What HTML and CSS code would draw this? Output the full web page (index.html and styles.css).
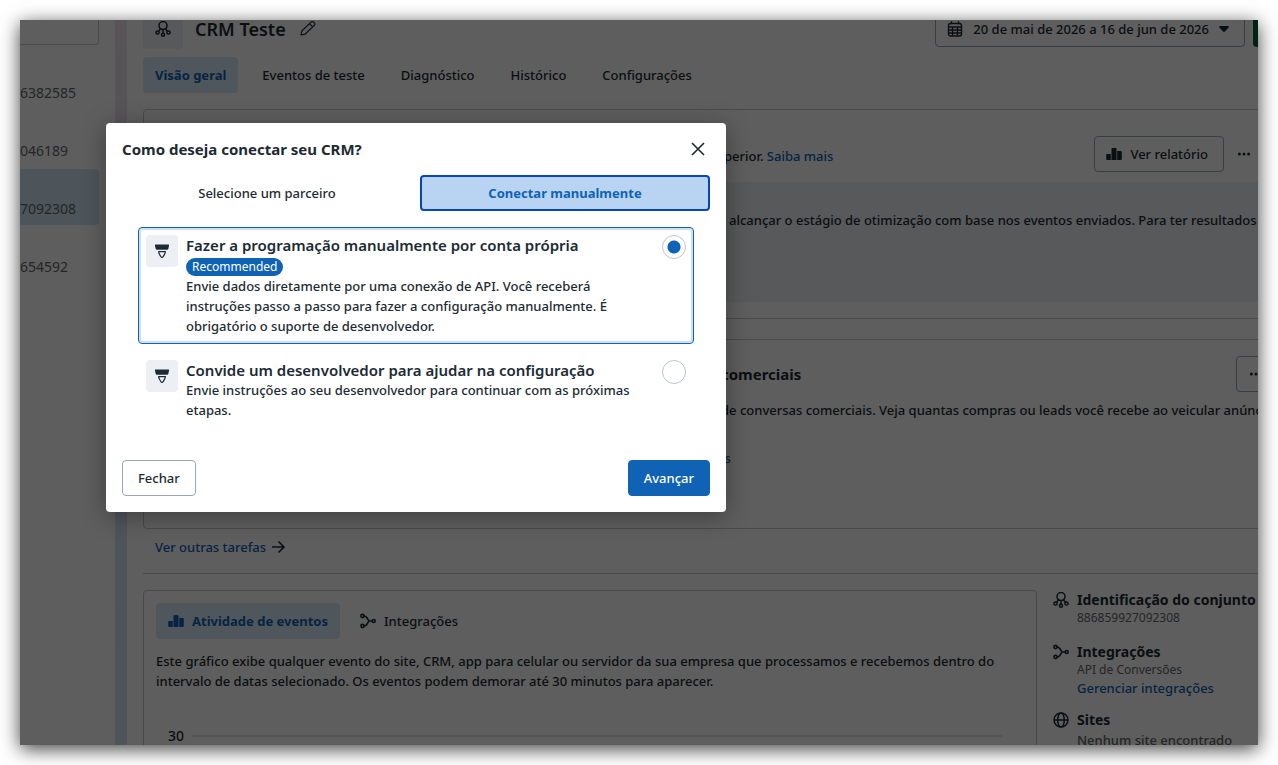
FILE: index.html
```html
<!DOCTYPE html>
<html lang="pt-BR">
<head>
  <meta charset="UTF-8">
  <meta name="viewport" content="width=device-width, initial-scale=1.0">
  <title>CRM Teste</title>
  <link rel="stylesheet" href="styles.css">
</head>
<body>
  <!-- Shared icons -->
  <svg class="icon-defs" aria-hidden="true">
    <symbol id="icon-dataset" viewBox="0 0 16 16">
      <g fill="none" stroke="currentColor" stroke-width="1.5">
        <path d="M5.300 7.600C4.300 6.800 4 5.600 4 4.500a4 4 0 0 1 8 0c0 1.100-.3 2.300-1.300 3.100M5.300 7.600c1.600 1 3.800 1 5.400 0M8 8.300v4"/>
        <circle cx="2.500" cy="11.500" r="1.600"/>
        <circle cx="8" cy="13.700" r="1.500"/>
        <circle cx="13.500" cy="11.500" r="1.600"/>
        <path d="M3.600 10.300l2.200-2.800M12.400 10.300l-2.200-2.800"/>
      </g>
    </symbol>
    <symbol id="icon-bars" viewBox="0 0 16 16">
      <path fill="currentColor" d="M1.2 8h3.600v6H1.2a1 1 0 0 1-1-1V9a1 1 0 0 1 1-1zM6.300 2h3.400a.8.8 0 0 1 .8.8V14h-5V2.800a.8.8 0 0 1 .8-.8zM11.200 5h3.600a1 1 0 0 1 1 1v7a1 1 0 0 1-1 1h-3.600z"/>
    </symbol>
    <symbol id="icon-branch" viewBox="0 0 16 16">
      <g fill="none" stroke="currentColor" stroke-width="1.6">
        <circle cx="2.500" cy="3" r="1.600"/>
        <circle cx="2.500" cy="13" r="1.600"/>
        <circle cx="13.700" cy="8" r="1.500"/>
        <path d="M4 3c4 0 3.500 5 5.500 5h2.700M4 13c4 0 3.500-5 5.500-5"/>
      </g>
    </symbol>
    <symbol id="icon-marker" viewBox="0 0 16 16">
      <path fill="currentColor" d="M1.500 1.500h13a.6.6 0 0 1 .6.700l-.7 3.200c-.2.900-.8 1.400-1.700 1.400H3.300c-.9 0-1.500-.5-1.700-1.400L.9 2.200A.6.6 0 0 1 1.500 1.500z"/>
      <path fill="none" stroke="currentColor" stroke-width="1.200" d="M4.700 8.700h6.600c.2 1.300-.7 2.700-2.200 5a1.300 1.300 0 0 1-2.200 0c-1.500-2.300-2.400-3.700-2.200-5z"/>
    </symbol>
    <symbol id="icon-dots" viewBox="0 0 16 16">
      <g fill="currentColor"><circle cx="3.400" cy="8" r="1.500"/><circle cx="8" cy="8" r="1.500"/><circle cx="12.600" cy="8" r="1.500"/></g>
    </symbol>
  </svg>

  <div class="window">
    <div class="app">
      <aside class="sidebar">
        <input class="search" type="text" aria-label="Pesquisar">
        <nav class="dataset-list">
          <a href="#">6382585</a>
          <a href="#">046189</a>
          <a href="#" class="selected">7092308</a>
          <a href="#">654592</a>
        </nav>
      </aside>

      <main class="main">
        <header class="page-header">
          <span class="dataset-icon"><svg class="icon"><use href="#icon-dataset"/></svg></span>
          <h1>CRM Teste</h1>
          <button class="edit-button" aria-label="Editar">
            <svg class="icon" viewBox="0 0 16 16" fill="none" stroke="currentColor" stroke-width="1.2" stroke-linejoin="round"><path d="M1 14l.8-4L11.300.9a1.400 1.400 0 0 1 2 0l1.200 1.200a1.400 1.400 0 0 1 0 2L5 13.200zM9.500 2.700l3.200 3.200"/></svg>
          </button>
          <div class="header-actions">
            <button class="outline-button date-button">
              <svg class="icon" viewBox="0 0 16 16" fill="none" stroke="currentColor" stroke-width="1.4"><rect x="1.500" y="2.500" width="13" height="12.500" rx="2"/><path d="M1.500 6h13M1.500 9h13M1.500 12h13M5.500 6v9M10.500 6v9M4.500.3v3M11.500.3v3"/></svg>
              20 de mai de 2026 a 16 de jun de 2026
              <svg class="caret" viewBox="0 0 10 6"><path fill="currentColor" d="M1 0h8c.9 0 1.200.8.7 1.400L5.900 5.500a1.200 1.200 0 0 1-1.800 0L.3 1.400C-.2.8.1 0 1 0z"/></svg>
            </button>
            <button class="create-button" aria-label="Criar"></button>
          </div>
        </header>

        <nav class="tabs">
          <button class="tab active">Visão geral</button>
          <button class="tab">Eventos de teste</button>
          <button class="tab">Diagnóstico</button>
          <button class="tab">Histórico</button>
          <button class="tab">Configurações</button>
        </nav>

        <section class="card task-card">
          <div class="task-top">
            <p class="task-lead">perior. <a href="#">Saiba mais</a></p>
            <button class="outline-button"><svg class="icon"><use href="#icon-bars"/></svg>Ver relatório</button>
            <button class="more-button" aria-label="Mais"><svg class="icon"><use href="#icon-dots"/></svg></button>
          </div>
          <div class="notice">
            <p>alcançar o estágio de otimização com base nos eventos enviados. Para ter resultados</p>
          </div>
        </section>

        <section class="card sales-card">
          <div class="sales-top">
            <h2>comerciais</h2>
            <button class="outline-button more-button" aria-label="Mais"><svg class="icon"><use href="#icon-dots"/></svg></button>
          </div>
          <p>de conversas comerciais. Veja quantas compras ou leads você recebe ao veicular anúncios</p>
          <a class="sales-link" href="#">is</a>
        </section>

        <a class="more-tasks" href="#">Ver outras tarefas
          <svg class="icon arrow" viewBox="0 0 16 16" fill="none" stroke="currentColor" stroke-width="1.600"><path d="M2 8h12M8.500 2.500L14 8l-5.500 5.500"/></svg>
        </a>

        <div class="overview">
          <section class="card activity">
            <div class="activity-tabs">
              <button class="tab active"><svg class="icon"><use href="#icon-bars"/></svg>Atividade de eventos</button>
              <button class="tab"><svg class="icon"><use href="#icon-branch"/></svg>Integrações</button>
            </div>
            <p>Este gráfico exibe qualquer evento do site, CRM, app para celular ou servidor da sua empresa que processamos e recebemos dentro do intervalo de datas selecionado. Os eventos podem demorar até 30 minutos para aparecer.</p>
            <div class="chart-row"><span>30</span><i class="grid-line"></i></div>
          </section>

          <aside class="details">
            <div class="detail">
              <svg class="icon"><use href="#icon-dataset"/></svg>
              <div><h3>Identificação do conjunto</h3><small>886859927092308</small></div>
            </div>
            <div class="detail">
              <svg class="icon"><use href="#icon-branch"/></svg>
              <div><h3>Integrações</h3><small>API de Conversões</small><a href="#">Gerenciar integrações</a></div>
            </div>
            <div class="detail">
              <svg class="icon" viewBox="0 0 16 16" fill="none" stroke="currentColor" stroke-width="1.500"><circle cx="8" cy="8" r="7"/><ellipse cx="8" cy="8" rx="3.300" ry="7"/><path d="M1 8h14"/></svg>
              <div><h3>Sites</h3><span>Nenhum site encontrado</span></div>
            </div>
          </aside>
        </div>
      </main>
    </div>

    <!-- Connect CRM dialog -->
    <div class="overlay">
      <form class="modal" role="dialog" aria-labelledby="modal-title">
        <div class="modal-header">
          <h2 id="modal-title">Como deseja conectar seu CRM?</h2>
          <button type="button" class="close-button" aria-label="Fechar janela">
            <svg viewBox="0 0 16 16" fill="none" stroke="currentColor" stroke-width="1.600"><path d="M2 2l12 12M14 2L2 14"/></svg>
          </button>
        </div>
        <div class="modal-tabs">
          <button type="button" class="modal-tab">Selecione um parceiro</button>
          <button type="button" class="modal-tab active">Conectar manualmente</button>
        </div>
        <div class="options">
          <label class="option selected">
            <span class="option-icon"><svg><use href="#icon-marker"/></svg></span>
            <span class="option-text">
              <strong>Fazer a programação manualmente por conta própria</strong>
              <span class="badge">Recommended</span>
              <span>Envie dados diretamente por uma conexão de API. Você receberá instruções passo a passo para fazer a configuração manualmente. É obrigatório o suporte de desenvolvedor.</span>
            </span>
            <input type="radio" name="setup" checked>
          </label>
          <label class="option">
            <span class="option-icon"><svg><use href="#icon-marker"/></svg></span>
            <span class="option-text">
              <strong>Convide um desenvolvedor para ajudar na configuração</strong>
              <span>Envie instruções ao seu desenvolvedor para continuar com as próximas etapas.</span>
            </span>
            <input type="radio" name="setup">
          </label>
        </div>
        <div class="modal-footer">
          <button type="button" class="footer-button">Fechar</button>
          <button type="submit" class="footer-button primary">Avançar</button>
        </div>
      </form>
    </div>
  </div>
</body>
</html>
```

FILE: styles.css
```css
:root {
  --text: #1c2b33;
  --muted: #63676b;
  --blue: #0f62b4;
  --light-blue: #d9ecfa;
  --border: #c3c9d0;
  --button-border: #9aa6b8;
  --font-family: 'Noto Sans', 'Open Sans', sans-serif;
}

/* General Reset */
* {
  margin: 0;
  padding: 0;
  box-sizing: border-box;
}

body {
  padding: 20px;
  font: 500 13px/20px var(--font-family);
  color: var(--text);
  background: #fff;
  overflow: hidden;
}

button, input {
  font: inherit;
  color: inherit;
  background: none;
  border: none;
}

button {
  cursor: pointer;
}

a {
  color: var(--blue);
  text-decoration: none;
}

h1 {
  font-size: 18px;
  font-weight: 600;
}

h2, h3 {
  font-size: 15px;
  line-height: 20px;
  font-weight: 700;
}

.icon-defs {
  position: absolute;
  width: 0;
  height: 0;
}

.icon {
  width: 16px;
  height: 16px;
  flex-shrink: 0;
}

.window {
  position: relative;
  height: calc(100vh - 40px);
  overflow: hidden;
  box-shadow: 0 4px 18px rgba(0, 0, 0, 0.75);
}

/* The page is scrolled down a little under the window's top edge */
.app {
  display: flex;
  margin: -11px -31px 0 0;
  background: linear-gradient(#efe4ee, #d4e2f5 70%, #d9e8ef);
}

/* Sidebar */
.sidebar {
  width: 95px;
  flex-shrink: 0;
  padding-right: 16px;
  background: #fff;
}

.search {
  display: block;
  width: 100%;
  height: 36px;
  border: 1px solid var(--border);
  border-left: none;
  border-radius: 0 4px 4px 0;
}

.dataset-list {
  display: flex;
  flex-direction: column;
  gap: 2px;
  margin-top: 8px;
}

.dataset-list a {
  height: 56px;
  padding-top: 30px;
  color: var(--muted);
  font-size: 14px;
  font-weight: 400;
  border-radius: 0 4px 4px 0;
}

.dataset-list .selected {
  background: #d3e6f5;
}

/* Main column */
.main {
  flex: 1;
  min-width: 0;
  margin-left: 12px;
  padding-left: 16px;
  background: #fff;
}

.page-header {
  display: flex;
  align-items: center;
  height: 40px;
}

.dataset-icon {
  display: flex;
  align-items: center;
  justify-content: center;
  width: 40px;
  height: 40px;
  margin-right: 12px;
  border-radius: 4px;
  background: #ecf0f5;
}

.edit-button {
  display: flex;
  margin-left: 14px;
}

.header-actions {
  display: flex;
  gap: 8px;
  margin-left: auto;
}

.outline-button {
  display: flex;
  align-items: center;
  gap: 8px;
  height: 36px;
  padding: 0 15px 0 11px;
  border: 1px solid var(--button-border);
  border-radius: 4px;
}

.date-button {
  gap: 10px;
}

.caret {
  width: 10px;
  height: 6px;
}

.create-button {
  width: 36px;
  border-radius: 4px;
  background: #00603a;
}

.tabs, .activity-tabs {
  display: flex;
  gap: 12px;
}

.tabs {
  margin: 8px 0 16px;
}

.activity-tabs {
  gap: 8px;
}

.tab {
  display: flex;
  align-items: center;
  gap: 8px;
  height: 36px;
  padding: 0 12px;
  border-radius: 4px;
}

.tab.active {
  color: var(--blue);
  font-weight: 700;
  background: var(--light-blue);
}

/* Task cards */
.card {
  border: 1px solid var(--border);
  border-radius: 4px;
}

.task-card, .sales-card {
  white-space: nowrap;
}

.task-card {
  padding: 26px 0 16px;
}

.task-top {
  display: flex;
  align-items: center;
  padding: 0 24px 0 580px;
}

.task-lead {
  flex: 1;
  padding-top: 4px;
}

.more-button {
  display: flex;
  align-items: center;
  justify-content: center;
  width: 40px;
  height: 36px;
  padding: 0;
}

.notice {
  height: 120px;
  margin-top: 10px;
  padding: 28px 0 0 585px;
  overflow: hidden;
  background: #ecf0f5;
}

.sales-card {
  height: 190px;
  margin-top: 20px;
  padding: 16px 12px 0 577px;
  overflow: hidden;
}

.sales-top {
  display: flex;
  align-items: center;
  justify-content: space-between;
  margin-bottom: 8px;
}

.sales-link {
  display: block;
  margin-top: 28px;
}

.more-tasks {
  display: flex;
  align-items: center;
  gap: 4px;
  height: 45px;
  padding: 0 0 8px 12px;
  border-bottom: 1px solid var(--border);
}

.arrow {
  color: var(--text);
}

/* Activity and details */
.overview {
  display: grid;
  grid-template-columns: 1fr 236px;
  gap: 16px;
  margin-top: 16px;
}

.activity {
  height: 300px;
  padding: 12px;
}

.activity p {
  margin-top: 12px;
}

.chart-row {
  display: flex;
  align-items: center;
  gap: 8px;
  margin-top: 35px;
  padding: 0 22px 0 12px;
  font-size: 14px;
}

.grid-line {
  flex: 1;
  height: 2px;
  background: #e4e6e8;
}

.details {
  display: flex;
  flex-direction: column;
  gap: 12px;
  white-space: nowrap;
}

.details h3 {
  font-size: 14px;
}

.detail {
  display: flex;
  gap: 8px;
}

.detail .icon {
  margin-top: 2px;
}

.detail small, .detail a, .detail span {
  display: block;
}

.detail small {
  color: var(--muted);
  font-size: 12px;
  font-weight: 400;
  line-height: 16px;
}

.detail small:last-child {
  margin-bottom: 4px;
}

.detail span {
  color: var(--muted);
}

/* Dialog */
.overlay {
  position: absolute;
  inset: 0;
  padding: 103px 86px;
  background: rgba(0, 0, 0, 0.63);
}

.modal {
  width: 100%;
  max-width: 620px;
  padding: 16px;
  border-radius: 4px;
  background: #fff;
  box-shadow: 0 4px 24px rgba(0, 0, 0, 0.35);
}

.modal-header {
  display: flex;
  align-items: center;
  justify-content: space-between;
}

.close-button {
  display: flex;
  padding: 0 4px;
}

.close-button svg {
  width: 16px;
  height: 16px;
}

.modal-tabs {
  display: flex;
  gap: 8px;
  margin-top: 16px;
}

.modal-tab {
  flex: 1;
  height: 36px;
  border: 2px solid transparent;
  border-radius: 4px;
}

.modal-tab.active {
  color: var(--blue);
  font-weight: 700;
  border-color: #0646bd;
  background: #b8d4f2;
}

.options {
  display: flex;
  flex-direction: column;
  gap: 8px;
  padding: 16px 16px 32px;
}

.option {
  display: flex;
  gap: 8px;
  padding: 7px;
  border: 1px solid transparent;
  border-radius: 4px;
}

.option.selected {
  border-color: var(--blue);
  box-shadow: inset 0 0 0 2px #cfe0f2;
}

.option-icon {
  display: flex;
  align-items: center;
  justify-content: center;
  width: 32px;
  height: 32px;
  border-radius: 4px;
  background: #ecf0f5;
}

.option-icon svg {
  width: 16px;
  height: 16px;
}

.option-text {
  display: flex;
  flex-direction: column;
  align-items: flex-start;
  flex: 1;
  padding-right: 16px;
}

.option-text strong {
  font-size: 15px;
  font-weight: 600;
}

.badge {
  margin-top: 3px;
  padding: 0 6px;
  color: #fff;
  font-size: 12px;
  font-weight: 400;
  line-height: 18px;
  border-radius: 9px;
  background: var(--blue);
}

.option input {
  appearance: none;
  width: 24px;
  height: 24px;
  border: 1px solid #bcc4d0;
  border-radius: 50%;
}

.option input:checked {
  background: radial-gradient(circle, var(--blue) 6px, #fff 7px);
}

.modal-footer {
  display: flex;
  justify-content: space-between;
}

.footer-button {
  height: 36px;
  padding: 0 15px;
  border: 1px solid var(--button-border);
  border-radius: 4px;
}

.footer-button.primary {
  color: #fff;
  border-color: var(--blue);
  background: var(--blue);
}
```
